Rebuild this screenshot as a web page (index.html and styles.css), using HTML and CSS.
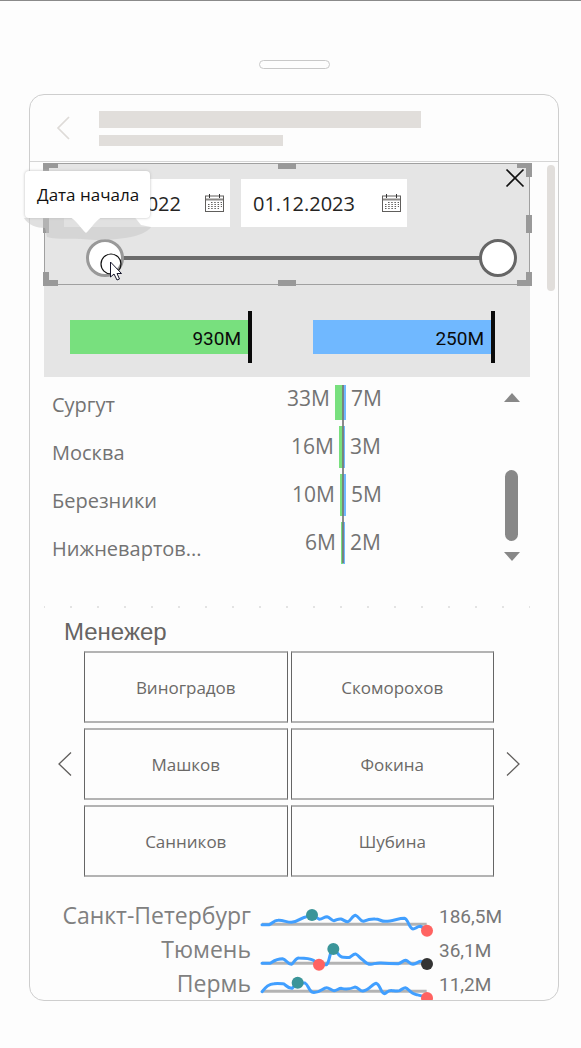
FILE: index.html
```html
<!DOCTYPE html>
<html lang="ru">
<head>
<meta charset="utf-8">
<meta name="viewport" content="width=device-width, initial-scale=1">
<title>Менежер</title>
<link rel="stylesheet" href="styles.css">
</head>
<body>
<div class="speaker"></div>
<main class="phone">
  <header class="phone-header">
    <button class="icon-button" aria-label="Назад"><svg width="15" height="24" viewBox="0 0 15 24"><path d="M13 1L2 12L13 23" fill="none" stroke="#dedbd8" stroke-width="1.7"/></svg></button>
    <div class="skeleton"><div class="skeleton-title"></div><div class="skeleton-sub"></div></div>
  </header>
  <div class="report">
    <div class="top">
      <section class="date-slicer">
        <div class="dates">
          <label class="date-box from"><input type="text" value="01.01.2022" aria-label="Дата начала"><svg width="19" height="18" viewBox="0 0 19 18"><use href="#calendar"/></svg></label>
          <label class="date-box"><input type="text" value="01.12.2023" aria-label="Дата окончания"><svg width="19" height="18" viewBox="0 0 19 18">
            <g id="calendar"><rect x=".5" y="2" width="18" height="15.5" fill="#fff" stroke="#605e5c"/><path d="M1 5.5H18" stroke="#8a8886" stroke-width="2"/><path d="M4.5 0V4M14.5 0V4" stroke="#333"/><path d="M6 8.5H17M3 10.5H17M3 12.5H17M3 14.5H14" stroke="#605e5c" stroke-dasharray="1.5 1.7"/></g></svg></label>
        </div>
        <div class="slider">
          <input class="thumb-start" type="range" min="0" max="100" value="0" aria-label="Дата начала">
          <input class="thumb-end" type="range" min="0" max="100" value="100" aria-label="Дата окончания">
        </div>
        <button class="icon-button close" aria-label="Закрыть"><svg width="18" height="18" viewBox="0 0 18 18"><path d="M.5 .5L17.5 17.5M17.5 .5L.5 17.5" stroke="#111" stroke-width="1.7"/></svg></button>
        <span class="handle tl"></span><span class="handle tc"></span><span class="handle tr"></span>
        <span class="handle ml"></span><span class="handle mr"></span>
        <span class="handle bl"></span><span class="handle bc"></span><span class="handle br"></span>
        <svg class="smudge" width="130" height="26" viewBox="0 0 130 26"><path d="M1 3C5 10 14 13 22 13L24 22C34 25 55 23 72 25C90 25 108 23 118 19C123 17 127 14 128 12L118 10L110 0Z" fill="#c8c8c8" fill-opacity=".55"/></svg>
        <div class="tooltip" role="tooltip">Дата начала<svg width="34" height="17" viewBox="0 0 34 17"><path d="M0 0H34C27 2 22 12 17 16C12 12 7 2 0 0Z" fill="#fff"/></svg></div>
        <svg class="cursor" width="26" height="30" viewBox="0 0 26 30"><circle cx="11" cy="11" r="10" fill="none" stroke="#111" stroke-width="1.2"/><path d="M10.500 9V24L14 21L17 27L19.500 26L17 20.500H21.500Z" fill="#fff" stroke="#16162b"/></svg>
      </section>
      <section class="kpis">
        <div class="kpi green"><span>930М</span></div>
        <div class="kpi blue"><span>250М</span></div>
      </section>
    </div>
    <div class="page-scroll"></div>
    <section class="matrix">
      <div class="matrix-rows">
        <div class="row first"><span class="city">Сургут</span><span class="neg">33M<i style="width:8px"></i></span><span class="pos"><i style="width:3px"></i>7M</span></div>
        <div class="row"><span class="city">Москва</span><span class="neg">16M<i style="width:4px"></i></span><span class="pos"><i style="width:2px"></i>3M</span></div>
        <div class="row"><span class="city">Березники</span><span class="neg">10M<i style="width:3px"></i></span><span class="pos"><i style="width:3px"></i>5M</span></div>
        <div class="row"><span class="city">Нижневартов...</span><span class="neg">6M<i style="width:2px"></i></span><span class="pos"><i style="width:2px"></i>2M</span></div>
      </div>
      <div class="list-scroll"><i class="up"></i><i class="grip"></i><i class="down"></i></div>
    </section>
    <section class="managers">
      <h2>Менежер</h2>
      <div class="carousel">
        <button class="icon-button" aria-label="Предыдущие"><svg width="14" height="24" viewBox="0 0 14 24"><path d="M13 .5L1 12L13 23.500" fill="none" stroke="#605e5c" stroke-width="1.3"/></svg></button>
        <div class="tiles">
          <button>Виноградов</button><button>Скоморохов</button>
          <button>Машков</button><button>Фокина</button>
          <button>Санников</button><button>Шубина</button>
        </div>
        <button class="icon-button" aria-label="Следующие"><svg width="14" height="24" viewBox="0 0 14 24"><path d="M1 .5L13 12L1 23.500" fill="none" stroke="#605e5c" stroke-width="1.3"/></svg></button>
      </div>
    </section>
  </div>
  <section class="trends">
    <div class="trend"><span class="name">Санкт-Петербург</span>
      <svg width="174" height="34" viewBox="30 12 522 102"><path class="base" d="M36 88H530"/><path class="line" d="M36 89H58C68 84 72 76 84 76C100 75 110 82 124 82C145 81 155 66 170 65L186 60L208 73C218 73 224 64 231 65C240 67 245 78 252 77C260 76 265 70 273 72C281 74 286 81 294 80C303 77 308 60 317 61C326 64 331 79 340 79C350 75 360 71 375 72C390 72 393 80 407 79C427 79 445 70 463 70C475 72 477 101 489 102C497 102 502 93 512 94L531 107"/><circle cx="186" cy="60" r="18" fill="#3b9599"/><circle cx="531" cy="107" r="18" fill="#ff6361"/></svg>
      <span class="total">186,5М</span></div>
    <div class="trend"><span class="name">Тюмень</span>
      <svg width="174" height="34" viewBox="30 114 522 102"><path class="base" d="M36 205H530"/><path class="line" d="M36 205H60C70 199 77 191 98 191C108 192 113 208 124 208C132 205 136 188 147 189C165 189 185 193 190 196L208 209L230 209C240 200 239 164 250 162C261 165 264 187 280 187C292 187 295 189 299 187C305 184 310 176 317 177C326 181 330 190 340 196C348 204 352 208 362 208C375 206 380 203 393 204C415 206 432 206 445 206C455 205 459 195 467 196C476 198 480 208 489 208C500 206 505 199 513 199L531 207"/><circle cx="207" cy="209" r="18" fill="#ff6361"/><circle cx="250" cy="162" r="18" fill="#3b9599"/><circle cx="531" cy="207" r="18" fill="#333"/></svg>
      <span class="total">36,1М</span></div>
    <div class="trend"><span class="name">Пермь</span>
      <svg width="174" height="34" viewBox="30 216 522 102"><path class="base" d="M36 289H530"/><path class="line" d="M36 290C48 276 57 266 72 266C85 264 94 266 102 267C111 274 116 281 126 280L143 263L165 264C174 268 177 289 188 292C209 295 218 278 230 278C238 278 243 287 252 287C261 287 265 280 274 280C285 283 302 282 315 276C325 277 330 290 339 288C358 286 367 266 379 265C392 270 392 296 404 296C412 292 415 285 427 287C437 288 444 289 449 287C457 283 460 278 466 278C475 279 480 297 500 299L531 307"/><circle cx="143" cy="263" r="18" fill="#3b9599"/><circle cx="531" cy="309" r="18" fill="#ff6361"/></svg>
      <span class="total">11,2М</span></div>
  </section>
</main>
</body>
</html>
```
FILE: styles.css
```css
* { box-sizing: border-box; }
body {
  margin: 0;
  height: 100vh;
  padding: 59px 22px 47px 29px;
  border-top: 1px solid #8a8a8a;
  background: #fdfdfd;
  display: flex;
  flex-direction: column;
  font-family: "Open Sans", "Noto Sans", sans-serif;
  font-size: 21px;
  color: #737373;
}
button, input { font: inherit; color: inherit; }
svg { display: block; flex: none; overflow: visible; }
.icon-button { padding: 0; border: 0; background: none; }

.speaker {
  align-self: center;
  width: 71px;
  height: 9px;
  margin-bottom: 25px;
  border: 1px solid #c8c8c8;
  border-radius: 5px;
}
.phone {
  flex: 1;
  min-height: 0;
  display: flex;
  flex-direction: column;
  border: 1px solid #cecece;
  border-radius: 15px;
}
.phone-header {
  display: flex;
  align-items: center;
  gap: 28px;
  height: 67px;
  padding-left: 26px;
  border-bottom: 1px solid #d5d5d5;
}
.skeleton { flex: 1; display: grid; gap: 7px; margin-right: 137px; }
.skeleton-title { height: 17px; background: #e1dedb; }
.skeleton-sub { height: 11px; width: 57%; background: #e1dedb; }

.report {
  display: grid;
  grid-template-columns: 1fr 28px;
  padding: 1px 0 0 14px;
}
.top { background: #e5e5e5; }
.date-slicer {
  position: relative;
  height: 122px;
  padding: 15px 12px 0 19px;
  border: 1px solid #a0a0a0;
}
.dates { display: flex; gap: 11px; color: #252423; font-size: 20px; }
.date-box {
  display: flex;
  align-items: center;
  width: 166px;
  height: 48px;
  padding: 0 6px 0 12px;
  background: #fff;
}
.date-box.from { padding-left: 15px; }
.date-box input {
  flex: 1;
  min-width: 0;
  padding: 0;
  border: 0;
  background: none;
  outline: 0;
}
.slider { position: relative; height: 38px; margin: 12px 0 0 22px; }
.slider::before {
  content: "";
  position: absolute;
  inset: 17px 10px;
  background: #6b6b6b;
}
.slider input {
  position: absolute;
  inset: 0;
  width: 100%;
  height: 38px;
  margin: 0;
  appearance: none;
  background: none;
  pointer-events: none;
}
.slider input::-webkit-slider-thumb {
  appearance: none;
  width: 38px;
  height: 38px;
  border: 3px solid #666;
  border-radius: 50%;
  background: #fff;
  pointer-events: auto;
}
.slider .thumb-start::-webkit-slider-thumb { border-color: #999; }
.close { position: absolute; top: 5px; right: 5px; }
.handle { position: absolute; width: 18px; height: 6px; background: #999; }
.tc { top: -1px; left: 50%; margin-left: -9px; }
.bc { bottom: -2px; left: 50%; margin-left: -9px; }
.ml, .mr { width: 6px; height: 18px; top: 51px; }
.ml { left: -2px; }
.mr { right: -3px; }
.tl, .tr, .bl, .br { width: 15px; height: 14px; background: none; border: 0 solid #999; }
.tl { top: -1px; left: -2px; border-width: 5px 0 0 6px; }
.tr { top: -1px; right: -3px; border-width: 5px 6px 0 0; }
.bl { bottom: -2px; left: -2px; border-width: 0 0 6px 6px; }
.br { bottom: -2px; right: -3px; border-width: 0 6px 6px 0; }
.smudge { position: absolute; top: 51px; left: -22px; }
.tooltip {
  position: absolute;
  top: 7px;
  left: -20px;
  height: 47px;
  padding: 0 11px 0 12px;
  border-radius: 4px;
  background: #fff;
  box-shadow: 0 0 3px #bbb;
  color: #111;
  font-size: 17px;
  line-height: 48px;
  white-space: nowrap;
}
.tooltip svg { position: absolute; top: 46px; left: 44px; }
.cursor { position: absolute; top: 89px; left: 55px; }

.kpis {
  display: grid;
  grid-template-columns: 1fr 1fr;
  height: 92px;
  padding: 26px 35px 13px 26px;
  gap: 61px;
}
.kpi {
  height: 52px;
  padding: 9px 0;
  border-right: 4px solid #0a0a0a;
}
.kpi span {
  display: block;
  height: 34px;
  padding-right: 7px;
  text-align: right;
  color: #0a0a0a;
  font: 19px/38px Roboto, sans-serif;
}
.green span { background: #78e07e; }
.blue span { background: #70b8ff; }
.page-scroll {
  width: 8px;
  height: 126px;
  margin: 2px 0 0 17px;
  border-radius: 4px;
  background: #e1dedb;
}

.matrix {
  grid-column: 1;
  display: flex;
  height: 231px;
  padding: 1px 11px 0 8px;
  background: linear-gradient(90deg, transparent 25px, #e3e3e3 25px) 1px 100% / 27px 2px repeat-x;
}
.matrix-rows {
  position: relative;
  flex: 1;
  display: flex;
  flex-direction: column;
  gap: 6px;
}
.matrix-rows::after {
  content: "";
  position: absolute;
  top: 7px;
  height: 178px;
  left: 290px;
  width: 2px;
  background: #777;
  opacity: .85;
}
.row {
  display: grid;
  grid-template: 42px / 160px 131px 1fr;
  line-height: 40px;
}
.city { padding-top: 7px; font-size: 20px; white-space: nowrap; }
.neg, .pos { display: flex; gap: 5px; }
.neg { justify-content: flex-end; }
.neg i { background: #78e07e; }
.pos i { background: #70b8ff; }
.first i { margin-top: 7px; }
.list-scroll {
  width: 15px;
  display: flex;
  flex-direction: column;
  align-items: center;
  padding-top: 15px;
}
.up, .down { border: 0 solid transparent; border-width: 0 8px; }
.up { border-bottom: 9px solid #888; }
.down { border-top: 9px solid #888; }
.grip { width: 13px; height: 71px; margin: 68px 0 11px; border-radius: 7px; background: #888; }

.managers { grid-column: 1; padding: 10px 10px 0 14px; }
.managers h2 {
  margin: 0 0 5px 6px;
  font: 24px/28px "Liberation Sans", sans-serif;
  color: #666462;
}
.carousel { display: flex; align-items: center; gap: 12px; }
.tiles { flex: 1; display: grid; grid-template-columns: 1fr 1fr; gap: 5px 3px; }
.tiles button {
  height: 72px;
  padding: 0;
  border: 1px solid #666;
  border-width: 2px 1px;
  border-color: #b3b3b3 #666;
  background: #fdfdfd;
  color: #6b6967;
  font-size: 17px;
}

.trends {
  flex: 1;
  min-height: 0;
  overflow: hidden;
  padding: 22px 28px 0 14px;
  border-radius: 0 0 14px 14px;
}
.trend { display: grid; grid-template-columns: 207px 174px 1fr; column-gap: 9px; height: 34px; }
.name { text-align: right; font-size: 23px; line-height: 32px; color: #808080; white-space: nowrap; }
.total { font: 19px/35px Roboto, sans-serif; color: #777; margin-left: -4px; }
.base { stroke: #b3b3b3; stroke-width: 9; }
.line { fill: none; stroke: #419fff; stroke-width: 9; stroke-linecap: round; stroke-linejoin: round; }
```
